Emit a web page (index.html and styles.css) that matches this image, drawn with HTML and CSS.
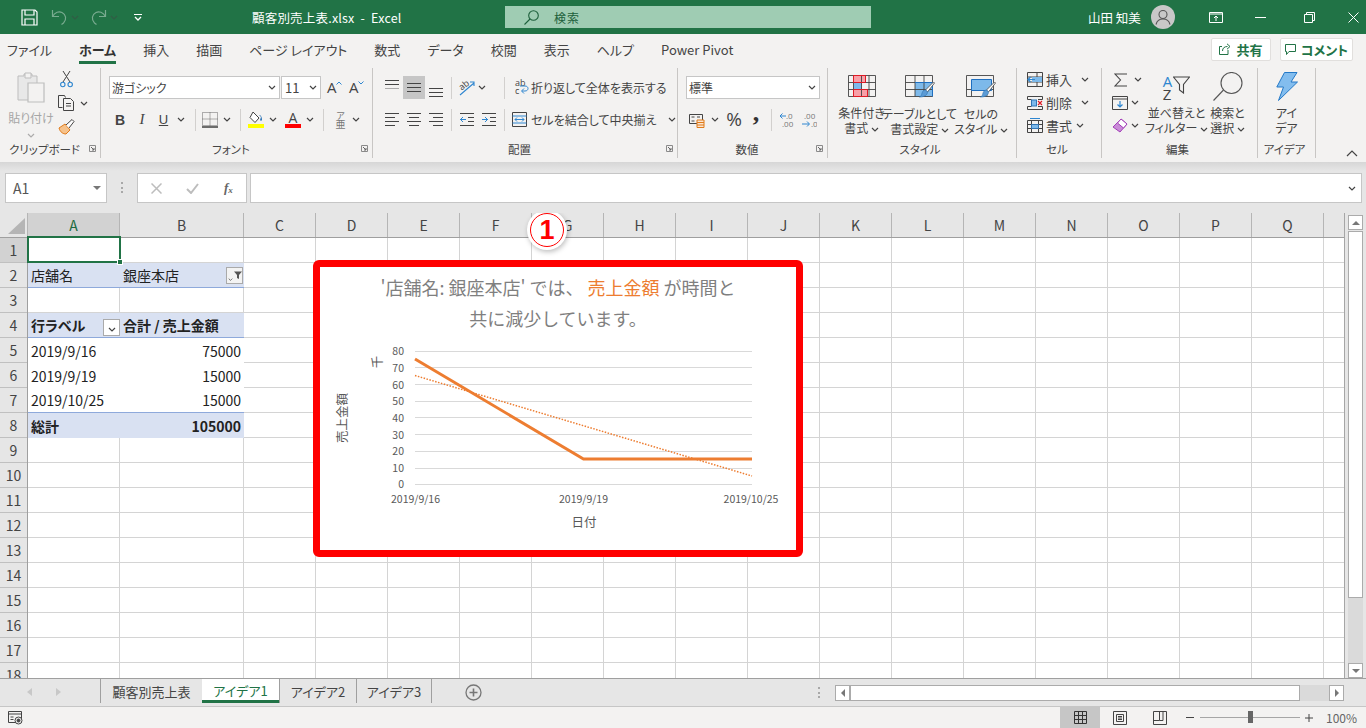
FILE: index.html
```html
<!DOCTYPE html>
<html lang="ja">
<head>
	<meta charset="utf-8">
	<title>顧客別売上表.xlsx - Excel</title>
	<link rel="stylesheet" href="styles.css">
</head>
<body>
	<!-- 使い回すアイコン -->
	<svg class="defs" width="0" height="0">
		<symbol id="chev" viewBox="0 0 8 5"><polyline points="1,1 4,4 7,1" fill="none" stroke="#444" stroke-width="1.2"/></symbol>
		<symbol id="launch" viewBox="0 0 7 7"><path d="M0.5 0.5h6v6h-6z" fill="none" stroke="#8a8a8a"/><path d="M2 2l3 3M5 3v2H3" fill="none" stroke="#666"/></symbol>
		<symbol id="brush" viewBox="0 0 16 17"><path d="M14.5 1l1 1-7 9-2-2z" fill="#fff" stroke="#555" stroke-width=".9"/><path d="M6.5 9l2 2c0 3-3 5-8 5 2-1 2-2 2.500-4 .5-2 2-3 3.500-3z" fill="#5b9bd5" stroke="#2e75b6" stroke-width=".6"/></symbol>
		<symbol id="funnel" viewBox="0 0 10 10"><path d="M1 1.500h8L6 5v4L4 8V5z" fill="#555"/></symbol>
	</svg>

	<header class="titlebar">
		<svg class="qa-save" width="17" height="17" viewBox="0 0 17 17" fill="none" stroke="#fff" stroke-width="1.200"><path d="M1 1h13l2 2v13H1z"/><path d="M4 1v5h9V1M4 16v-6h9v6"/></svg>
		<svg class="qa-undo" width="17" height="17" viewBox="0 0 17 17" fill="none" stroke="#79ab90" stroke-width="1.200"><path d="M1.500 1v6.500H8"/><path d="M1.500 7.500C4 3 8 2 11 3.500c4 2 5 7 1.500 10.500l-2 1.500"/></svg>
		<svg class="chev dim"><use href="#chev"/></svg>
		<svg class="qa-redo" width="17" height="17" viewBox="0 0 17 17" fill="none" stroke="#79ab90" stroke-width="1.200"><path d="M15.500 1v6.500H9"/><path d="M15.500 7.500C13 3 9 2 6 3.500c-4 2-5 7-1.500 10.500l2 1.500"/></svg>
		<svg class="chev dim"><use href="#chev"/></svg>
		<svg class="qa-more" width="8" height="7" viewBox="0 0 8 7" fill="none" stroke="#fff"><path d="M0 .5h8"/><path d="M1 3l3 3 3-3" stroke-width="1.300"/></svg>
		<div class="doc-title">顧客別売上表.xlsx&nbsp; - &nbsp;Excel</div>
		<div class="searchbox">
			<svg width="15" height="15" viewBox="0 0 15 15" fill="none" stroke="#1d5f3b" stroke-width="1.100"><circle cx="9.500" cy="5.500" r="4.800"/><path d="M6 9l-5.500 5.500"/></svg>
			<span>検索</span>
		</div>
		<div class="username">山田 知美</div>
		<svg class="avatar" width="24" height="24" viewBox="0 0 24 24"><circle cx="12" cy="12" r="12" fill="#c8c8c8"/><circle cx="12" cy="9.500" r="4" fill="none" stroke="#555" stroke-width="1.100"/><path d="M5 19.500c1-4 4-5.500 7-5.500s6 1.500 7 5.500" fill="none" stroke="#555" stroke-width="1.100"/></svg>
		<svg class="win-display" width="14" height="12" viewBox="0 0 14 12" fill="none" stroke="#fff"><path d="M.5 1.500h13v10H.5zM.5 3h13"/><path d="M7 10V5M5 7l2-2 2 2"/></svg>
		<svg class="win-min" width="11" height="1" viewBox="0 0 11 1"><path d="M0 .5h11" stroke="#fff"/></svg>
		<svg class="win-restore" width="11" height="11" viewBox="0 0 11 11" fill="none" stroke="#fff"><path d="M.5 2.500h8v8h-8zM2.500 2.500v-2h8v8h-2"/></svg>
		<svg class="win-close" width="11" height="11" viewBox="0 0 11 11" stroke="#fff"><path d="M.5.5l10 10M10.500.5l-10 10"/></svg>
	</header>

	<nav class="tabs">
		<a>ファイル</a>
		<a class="on">ホーム</a>
		<a>挿入</a>
		<a>描画</a>
		<a>ページ レイアウト</a>
		<a>数式</a>
		<a>データ</a>
		<a>校閲</a>
		<a>表示</a>
		<a>ヘルプ</a>
		<a>Power Pivot</a>
		<div class="tab-btns">
			<button class="share">
				<svg width="12" height="12" viewBox="0 0 12 12" fill="none" stroke="#217346"><path d="M9 7v4.500H.5V3.500H3"/><path d="M3.500 8c0-3 2-4.500 5-4.500M8 .8l3 2.700-3 2.700"/></svg>
				共有
			</button>
			<button class="comment">
				<svg width="11" height="11" viewBox="0 0 11 11" fill="none" stroke="#217346"><path d="M.5.5h10v7H4l-2.500 3v-3h-1z"/></svg>
				コメント
			</button>
		</div>
	</nav>

	<section class="ribbon">
		<!-- クリップボード -->
		<div class="group g-clip">
			<div class="group-body clip-body">
				<div class="big paste">
					<svg width="28" height="31" viewBox="0 0 28 31"><path d="M1 4h6v-2h8v2h5v24H1z" fill="#e8e8e8" stroke="#bdbdbd"/><path d="M8 1h6v5H8z" fill="#f3f2f1" stroke="#bdbdbd"/><path d="M11 11h16v19H11z" fill="#f3f2f1" stroke="#bdbdbd" stroke-width="1.200"/></svg>
					<span class="paste-label">貼り付け</span>
					<svg class="chev grey"><use href="#chev"/></svg>
				</div>
				<div class="clip-tools">
					<svg class="ic-cut" width="13" height="17" viewBox="0 0 13 17" fill="none"><path d="M3 0l7 11M10 0L3 11" stroke="#444"/><circle cx="2.800" cy="13.500" r="2.200" stroke="#2e86d0" stroke-width="1.100"/><circle cx="10.200" cy="13.500" r="2.200" stroke="#2e86d0" stroke-width="1.100"/></svg>
					<div class="row-inline">
						<svg width="17" height="16" viewBox="0 0 17 16" fill="none" stroke="#444"><path d="M4.500 12.500H.5V.5h6l1 2"/><path d="M5.500 3.500h7l3 3v9h-10z"/><path d="M8 8.500h5M8 11h5"/></svg>
						<svg class="chev copy-chev"><use href="#chev"/></svg>
					</div>
					<svg class="ic-painter" width="17" height="16" viewBox="0 0 17 16"><path d="M1 9l6-4 5 6-4 4C5 15 2 13 1 9z" fill="#f6c28b" stroke="#e07b1a"/><path d="M8 6l6-5.500 2 2L11 9" fill="#fff" stroke="#444"/></svg>
				</div>
			</div>
			<div class="group-label"><span>クリップボード</span><svg class="launch"><use href="#launch"/></svg></div>
		</div>

		<!-- フォント -->
		<div class="group g-font">
			<div class="group-body pad8">
				<div class="tool-row">
					<div class="combo w171"><span>游ゴシック</span><svg class="chev"><use href="#chev"/></svg></div>
					<div class="combo w40 size-combo"><span>11</span><svg class="chev"><use href="#chev"/></svg></div>
					<span class="grow-a ml6">A<svg class="caret" width="6" height="4" viewBox="0 0 6 4" fill="none" stroke="#2e86d0"><path d="M.5 3.500L3 1l2.500 2.500"/></svg></span>
					<span class="grow-a ml7">A<svg class="caret" width="6" height="4" viewBox="0 0 6 4" fill="none" stroke="#2e86d0"><path d="M.5.5L3 3 5.500.5"/></svg></span>
				</div>
				<div class="tool-row row2">
					<b class="txt-btn w22 bold-b">B</b>
					<i class="txt-btn w22 ital-i">I</i>
					<u class="txt-btn w21 und-u">U</u>
					<span class="slot w14"><svg class="chev"><use href="#chev"/></svg></span>
					<span class="sep ml7"></span>
					<svg class="ml6" width="16" height="16" viewBox="0 0 16 16" fill="none"><path d="M.5.500h15v13H.5zM8 .5v13M.5 7h15" stroke="#666" stroke-dasharray="1 1"/><path d="M0 15h16" stroke="#222" stroke-width="1.300"/></svg>
					<span class="slot w18"><svg class="chev"><use href="#chev"/></svg></span>
					<span class="sep ml4"></span>
					<svg class="ml7" width="16" height="17" viewBox="0 0 16 17"><path d="M5 1l6 6-4 4.500-5-5z" fill="#fff" stroke="#444"/><path d="M11 4c2 0 3 2 3 5l-1 1-1-1 1-3z" fill="#2e75b6"/><rect x="0" y="13" width="16" height="4" fill="#ffff00"/></svg>
					<span class="slot w18"><svg class="chev"><use href="#chev"/></svg></span>
					<span class="font-color ml3">A</span>
					<span class="slot w18"><svg class="chev"><use href="#chev"/></svg></span>
					<span class="sep ml4"></span>
					<span class="phonetic ml10"><small>ア</small>亜</span>
					<span class="slot w18"><svg class="chev"><use href="#chev"/></svg></span>
				</div>
			</div>
			<div class="group-label"><span>フォント</span><svg class="launch"><use href="#launch"/></svg></div>
		</div>

		<!-- 配置 -->
		<div class="group g-align">
			<div class="group-body pad8">
				<div class="tool-row">
					<span class="slot w22"><svg class="al" width="14" height="22" viewBox="0 0 14 22" stroke="#444"><path d="M0 3.500h14M0 7.500h14"/><path d="M0 11.500h14" stroke="#aaa"/></svg></span>
					<span class="slot w22 active"><svg class="al" width="14" height="22" viewBox="0 0 14 22" stroke="#444"><path d="M0 6.500h14M0 10.500h14M0 14.500h14"/></svg></span>
					<span class="slot w22"><svg class="al" width="14" height="22" viewBox="0 0 14 22" stroke="#444"><path d="M0 11.500h14M0 15.500h14M0 19.500h14"/></svg></span>
					<span class="sep ml4"></span>
					<svg class="ml7" width="16" height="16" viewBox="0 0 16 16" fill="none"><path d="M1 15L15 3M11 2h4v4" stroke="#2e86d0" stroke-width="1.100"/><text x="0" y="9" class="rot-txt" transform="rotate(-40 4 6)">ab</text></svg>
					<span class="slot w14"><svg class="chev"><use href="#chev"/></svg></span>
					<span class="sep ml15"></span>
					<svg class="ml9" width="15" height="17" viewBox="0 0 15 17" fill="none"><text x="1" y="7" class="wrap-txt">ab</text><text x="1" y="15" class="wrap-txt">c</text><path d="M8 12h3c4 0 4-5 0-5H6M10 9.500L7.500 12l2.500 2.500" stroke="#2e86d0"/></svg>
					<span class="rib-text ml2">折り返して全体を表示する</span>
				</div>
				<div class="tool-row row2">
					<span class="slot w22"><svg width="14" height="13" viewBox="0 0 14 13" stroke="#444"><path d="M0 .5h14M0 4.500h10M0 8.500h14M0 12.500h10"/></svg></span>
					<span class="slot w22"><svg width="14" height="13" viewBox="0 0 14 13" stroke="#444"><path d="M0 .5h14M2 4.500h10M0 8.500h14M2 12.500h10"/></svg></span>
					<span class="slot w22"><svg width="14" height="13" viewBox="0 0 14 13" stroke="#444"><path d="M0 .5h14M4 4.500h10M0 8.500h14M4 12.500h10"/></svg></span>
					<span class="sep ml4"></span>
					<svg class="ml8" width="14" height="13" viewBox="0 0 14 13" fill="none"><path d="M0 .5h14M0 12.500h14M8 4.500h6M8 8.500h6" stroke="#444"/><path d="M6 6.500H0M3 4L.5 6.500 3 9" stroke="#2e86d0"/></svg>
					<svg class="ml8" width="14" height="13" viewBox="0 0 14 13" fill="none"><path d="M0 .5h14M0 12.500h14M8 4.500h6M8 8.500h6" stroke="#444"/><path d="M0 6.500h6M3 4l2.500 2.500L3 9" stroke="#2e86d0"/></svg>
					<span class="sep ml8"></span>
					<svg class="ml7" width="15" height="15" viewBox="0 0 15 15" fill="none"><path d="M.5.5h14v14H.5z" stroke="#444"/><path d="M.5 4h14M.5 11h14" stroke="#2e86d0"/><path d="M3 7.500h9M5 5.500l-2 2 2 2M10 5.500l2 2-2 2" stroke="#2e86d0"/></svg>
					<span class="rib-text ml4">セルを結合して中央揃え</span>
					<svg class="chev merge-chev"><use href="#chev"/></svg>
				</div>
			</div>
			<div class="group-label"><span>配置</span><svg class="launch"><use href="#launch"/></svg></div>
		</div>

		<!-- 数値 -->
		<div class="group g-num">
			<div class="group-body pad8">
				<div class="tool-row">
					<div class="combo w134"><span>標準</span><svg class="chev"><use href="#chev"/></svg></div>
				</div>
				<div class="tool-row row2">
					<svg class="ml3" width="16" height="16" viewBox="0 0 16 16" fill="none"><path d="M.5 2.500h13v9H.5z" stroke="#444"/><path d="M2.500 5h3M2.500 9h3M8 5h3" stroke="#444"/><path d="M8 8h7v7.500H8z" fill="#fbe5d0" stroke="#e07b1a"/><path d="M8 10.500h7M8 13h7" stroke="#e07b1a"/></svg>
					<span class="slot w20"><svg class="chev"><use href="#chev"/></svg></span>
					<span class="percent ml1">%</span>
					<span class="comma ml10">,</span>
					<span class="sep ml11"></span>
					<svg class="ml7" width="16" height="16" viewBox="0 0 16 16" fill="none"><text x="7" y="6.500" class="dec-txt">.0</text><text x="3" y="15" class="dec-txt">.00</text><path d="M7 4H1M3.500 1.500L1 4l2.500 2.500" stroke="#2e86d0"/></svg>
					<svg class="ml6" width="16" height="16" viewBox="0 0 16 16" fill="none"><text x="3" y="6.500" class="dec-txt">.00</text><text x="10" y="15" class="dec-txt">.0</text><path d="M1 12h7M6 9.500L8.500 12 6 14.500" stroke="#2e86d0"/></svg>
				</div>
			</div>
			<div class="group-label"><span>数値</span><svg class="launch"><use href="#launch"/></svg></div>
		</div>

		<!-- スタイル -->
		<div class="group g-style">
			<div class="group-body style-body">
				<div class="big w51">
					<svg width="28" height="22" viewBox="0 0 28 22" fill="none"><path d="M5.500 .5h12v7h-12zM5.500 14.500h14v7h-14z" fill="#f8a0a8" stroke="#e01b24"/><path d="M5.500 7.500h8v7h-8z" fill="#7db9ea"/><path d="M.5.500h27v21H.5zM.5 7.500h27M.5 14.500h27M5.500.5v21M13.500.5v21M21 .5v21" stroke="#444" stroke-width=".9"/><path d="M5.500 .5h12v7h-12zM5.500 14.500h14v7h-14z" stroke="#e01b24"/></svg>
					<span class="big-label">条件付き<br>書式 <svg class="chev"><use href="#chev"/></svg></span>
				</div>
				<div class="big w65">
					<div class="brushed">
						<svg width="28" height="22" viewBox="0 0 28 22" fill="none"><path d="M10 7.500h17v14H10z" fill="#7db9ea"/><path d="M.5.500h27v21H.5zM.5 7.500h27M.5 14.500h27M10 .5v21M19 .5v21" stroke="#444" stroke-width=".9"/><path d="M10 7.500h17.500v14" stroke="#1f6fc0"/></svg>
						<svg class="brush"><use href="#brush"/></svg>
					</div>
					<span class="big-label">テーブルとして<br>書式設定 <svg class="chev"><use href="#chev"/></svg></span>
				</div>
				<div class="big w58">
					<div class="brushed">
						<svg width="28" height="22" viewBox="0 0 28 22" fill="none"><path d="M.5.500h27v21H.5zM.5 14.500h27M5.500 14.500v7M21 14.500v7" stroke="#444" stroke-width=".9"/><path d="M5.500 4.500h20v11h-20z" fill="#7db9ea" stroke="#1f6fc0"/></svg>
						<svg class="brush"><use href="#brush"/></svg>
					</div>
					<span class="big-label">セルの<br>スタイル <svg class="chev"><use href="#chev"/></svg></span>
				</div>
			</div>
			<div class="group-label center"><span>スタイル</span></div>
		</div>

		<!-- セル -->
		<div class="group g-cells">
			<div class="group-body cell-rows">
				<div class="cell-tool">
					<svg width="16" height="15" viewBox="0 0 16 15" fill="none"><path d="M.5.500h15v14H.5zM.5 5h15M.5 10h15M10 .5v14" stroke="#444"/><path d="M5 5h10v5H5z" fill="#7db9ea"/><path d="M8 7.500H1M3.500 5L1 7.500 3.500 10" stroke="#2e86d0" stroke-width="1.200"/></svg>
					<span>挿入</span><svg class="chev chev-far"><use href="#chev"/></svg>
				</div>
				<div class="cell-tool">
					<svg width="16" height="14" viewBox="0 0 16 14" fill="none"><path d="M.5 3.500v-3h15v3M.5 10.500v3h15v-3M.5 3.500h4M.5 10.500h4M11 3.500h4.500M11 10.500h4.500" stroke="#444"/><rect x="4.500" y="4" width="5" height="6" fill="#7db9ea" stroke="#2e75b6"/><path d="M11 5l4 4M15 5l-4 4" stroke="#e01b24" stroke-width="1.100"/></svg>
					<span>削除</span><svg class="chev chev-far"><use href="#chev"/></svg>
				</div>
				<div class="cell-tool">
					<svg width="16" height="15" viewBox="0 0 16 15" fill="none"><path d="M.5 2.500h15v12H.5zM.5 6.500h15M.5 10.500h15M4.500 2.500v12M11.500 2.500v12" stroke="#444"/><path d="M4.500 6.500h7v4h-7z" fill="#7db9ea" stroke="#2e75b6"/><path d="M3 .5h10" stroke="#2e86d0"/></svg>
					<span>書式</span><svg class="chev chev-near"><use href="#chev"/></svg>
				</div>
			</div>
			<div class="group-label center"><span>セル</span></div>
		</div>

		<!-- 編集 -->
		<div class="group g-edit">
			<div class="group-body edit-body">
				<div class="edit-rows">
					<div class="edit-tool">
						<svg class="ml2" width="13" height="14" viewBox="0 0 13 14" fill="none" stroke="#444" stroke-width="1.100"><path d="M13 1H1l5.500 6L1 13h12"/></svg>
						<svg class="chev ml7"><use href="#chev"/></svg>
					</div>
					<div class="edit-tool">
						<svg width="16" height="14" viewBox="0 0 16 14" fill="none"><path d="M.5.500h15v13H.5zM.5 3h15" stroke="#444"/><path d="M8 5v6M5.500 8.500L8 11l2.500-2.500" stroke="#2e86d0" stroke-width="1.200"/></svg>
						<svg class="chev ml3"><use href="#chev"/></svg>
					</div>
					<div class="edit-tool">
						<svg width="16" height="15" viewBox="0 0 16 15"><path d="M9 1l6 5-7 8-7-5z" fill="#c98bd8" stroke="#a33fb8"/><path d="M9 1l6 5-3.500 4-6-5z" fill="#fff" stroke="#a33fb8"/></svg>
						<svg class="chev ml3"><use href="#chev"/></svg>
					</div>
				</div>
				<div class="big w53">
					<div class="sort-ic">
						<span class="az"><em>A</em><br>Z</span>
						<svg width="17" height="18" viewBox="0 0 17 18" fill="none" stroke="#444" stroke-width="1.100"><path d="M.5 1h16L10.500 8.500V17l-4-3V8.500z"/></svg>
					</div>
					<span class="big-label tight">並べ替えと<br>フィルター <svg class="chev"><use href="#chev"/></svg></span>
				</div>
				<div class="big w49">
					<svg width="30" height="29" viewBox="0 0 30 29" fill="none" stroke="#555" stroke-width="1.100"><circle cx="18.500" cy="11" r="10.500"/><path d="M10.500 18L.5 28.500"/></svg>
					<span class="big-label tight">検索と<br>選択 <svg class="chev"><use href="#chev"/></svg></span>
				</div>
			</div>
			<div class="group-label center"><span>編集</span></div>
		</div>

		<!-- アイデア -->
		<div class="group g-idea">
			<div class="group-body">
				<div class="big wfull">
					<svg width="22" height="29" viewBox="0 0 22 29"><path d="M8.500 .5h12.500l-6 9.500h6.500L2.500 28.500 7.500 15H.8z" fill="#83bdee" stroke="#2479c7"/></svg>
					<span class="big-label tight">アイ<br>デア</span>
				</div>
			</div>
			<div class="group-label center"><span>アイデア</span></div>
		</div>

		<svg class="collapse" width="12" height="7" viewBox="0 0 12 7" fill="none" stroke="#444" stroke-width="1.200"><path d="M1 6l5-5 5 5"/></svg>
	</section>

	<section class="formula-bar">
		<div class="namebox"><span>A1</span><i class="tri"></i></div>
		<div class="fx-dots"></div>
		<div class="fx-btns">
			<svg width="11" height="11" viewBox="0 0 11 11" stroke="#bdbdbd" stroke-width="1.500"><path d="M.5.5l10 10M10.500.5l-10 10"/></svg>
			<svg width="13" height="11" viewBox="0 0 13 11" fill="none" stroke="#bdbdbd" stroke-width="2"><path d="M1 6l4 4 7-9"/></svg>
			<span class="fx">f<sub>x</sub></span>
		</div>
		<div class="fx-input"><svg class="chev"><use href="#chev"/></svg></div>
	</section>

	<section class="sheet">
		<div class="grid-area">
			<div class="col-head">
				<div class="corner"><svg width="17" height="16" viewBox="0 0 17 16"><path d="M17 0v16H0z" fill="#b5b5b5"/></svg></div>
				<div class="ch ca sel-h">A</div>
				<div class="ch cb">B</div>
				<div class="ch">C</div>
				<div class="ch">D</div>
				<div class="ch">E</div>
				<div class="ch">F</div>
				<div class="ch">G</div>
				<div class="ch">H</div>
				<div class="ch">I</div>
				<div class="ch">J</div>
				<div class="ch">K</div>
				<div class="ch">L</div>
				<div class="ch">M</div>
				<div class="ch">N</div>
				<div class="ch">O</div>
				<div class="ch">P</div>
				<div class="ch">Q</div>
				<div class="ch crest"></div>
			</div>
			<div class="grid-body">
				<div class="row-head">
					<div class="rh sel-h">1</div><div class="rh">2</div><div class="rh">3</div>
					<div class="rh">4</div><div class="rh">5</div><div class="rh">6</div>
					<div class="rh">7</div><div class="rh">8</div><div class="rh">9</div>
					<div class="rh">10</div><div class="rh">11</div><div class="rh">12</div>
					<div class="rh">13</div><div class="rh">14</div><div class="rh">15</div>
					<div class="rh">16</div><div class="rh">17</div><div class="rh">18</div>
				</div>
				<div class="col ca">
					<div class="cell a1"><div class="selection"><i></i></div></div>
					<div class="cell pv-band">店舗名</div>
					<div class="cell"></div>
					<div class="cell pv-band bold">行ラベル<span class="filter-btn"><svg class="chev"><use href="#chev"/></svg></span></div>
					<div class="cell pv-row">2019/9/16</div>
					<div class="cell pv-row">2019/9/19</div>
					<div class="cell pv-row pv-last">2019/10/25</div>
					<div class="cell pv-total bold">総計</div>
				</div>
				<div class="col cb">
					<div class="cell"></div>
					<div class="cell pv-band">銀座本店<span class="filter-btn"><svg class="chev small"><use href="#chev"/></svg><svg class="funnel"><use href="#funnel"/></svg></span></div>
					<div class="cell"></div>
					<div class="cell pv-band bold">合計 / 売上金額</div>
					<div class="cell pv-row num">75000</div>
					<div class="cell pv-row num">15000</div>
					<div class="cell pv-row pv-last num">15000</div>
					<div class="cell pv-total bold num">105000</div>
				</div>
				<div class="col"></div><div class="col"></div><div class="col"></div><div class="col"></div>
				<div class="col"></div><div class="col"></div><div class="col"></div><div class="col"></div>
				<div class="col"></div><div class="col"></div><div class="col"></div><div class="col"></div>
				<div class="col"></div><div class="col"></div><div class="col"></div>
				<div class="col crest"></div>
			</div>
		</div>

		<div class="vscroll">
			<div class="sb-btn"><i class="tri up"></i></div>
			<div class="sb-thumb"></div>
			<div class="sb-track"></div>
			<div class="sb-btn"><i class="tri"></i></div>
		</div>

		<!-- グラフ（シートの上に浮いている） -->
		<div class="chart">
			<div class="chart-title">'店舗名: 銀座本店' では、 <span class="hl">売上金額</span> が時間と<br>共に減少しています。</div>
			<svg class="plot" width="476" height="216" viewBox="0 0 476 216">
				<g stroke="#d9d9d9">
					<path d="M95 17.500h337M95 33.500h337M95 50.500h337M95 67.500h337M95 83.500h337M95 100.500h337M95 117.500h337M95 134.500h337M95 150.500h337"/>
				</g>
				<g class="tick" text-anchor="end">
					<text x="84" y="21">80</text><text x="84" y="37.500">70</text><text x="84" y="54.500">60</text>
					<text x="84" y="71">50</text><text x="84" y="87.500">40</text><text x="84" y="104.500">30</text>
					<text x="84" y="121">20</text><text x="84" y="137.500">10</text><text x="84" y="154">0</text>
				</g>
				<g class="tick" text-anchor="middle">
					<text x="95.500" y="169">2019/9/16</text><text x="263.500" y="169">2019/9/19</text><text x="431" y="169">2019/10/25</text>
				</g>
				<text class="axis" x="264" y="193" text-anchor="middle">日付</text>
				<text class="axis" text-anchor="middle" transform="translate(26.500 84) rotate(-90)">売上金額</text>
				<text class="axis" text-anchor="middle" transform="translate(61.500 28) rotate(-90)">千</text>
				<path d="M95 25L263.500 125H432" fill="none" stroke="#ed7d31" stroke-width="3"/>
				<path d="M95 41.500L432 142" fill="none" stroke="#ed7d31" stroke-width="1.500" stroke-dasharray="1.500 1.500"/>
			</svg>
		</div>
		<div class="badge">1</div>
	</section>

	<section class="sheet-tabs">
		<div class="tab-nav">
			<svg width="5" height="8" viewBox="0 0 5 8"><path d="M5 0v8L0 4z" fill="#c8c8c8"/></svg>
			<svg width="5" height="8" viewBox="0 0 5 8"><path d="M0 0v8l5-4z" fill="#c8c8c8"/></svg>
		</div>
		<div class="stab w102">顧客別売上表</div>
		<div class="stab on">アイデア1</div>
		<div class="stab w77">アイデア2</div>
		<div class="stab w76">アイデア3</div>
		<svg class="add-sheet" width="17" height="17" viewBox="0 0 17 17" fill="none" stroke="#777"><circle cx="8.500" cy="8.500" r="7.500" stroke-width="1.300"/><path d="M8.500 4.500v8M4.500 8.500h8" stroke-width="1.600"/></svg>
		<div class="split-dots"></div>
		<div class="hscroll">
			<div class="sb-btn"><i class="tri left"></i></div>
			<div class="hs-thumb"></div>
			<div class="hs-track"></div>
			<div class="sb-btn"><i class="tri right"></i></div>
		</div>
	</section>

	<footer class="status">
		<svg width="15" height="14" viewBox="0 0 15 14" fill="none" stroke="#444"><path d="M.5.500h13v11H.5zM.5 3h13M2.500 6h3M2.500 8.500h3"/><circle cx="10.500" cy="9.500" r="3.500" fill="#f3f2f1"/><circle cx="10.500" cy="9.500" r="1.500" fill="#444"/></svg>
		<div class="view-btns">
			<span class="view on"><svg width="13" height="13" viewBox="0 0 13 13" fill="none" stroke="#333"><path d="M.5.500h12v12H.5zM4.500.5v12M8.500.5v12M.5 4.500h12M.5 8.500h12"/></svg></span>
			<span class="view"><svg width="14" height="14" viewBox="0 0 14 14" fill="none" stroke="#444"><path d="M.5.500h13v13H.5zM3.500 3.500h7v7h-7zM5 5.500h4M5 7h4M5 8.500h4"/></svg></span>
			<span class="view"><svg width="14" height="14" viewBox="0 0 14 14" fill="none" stroke="#444"><path d="M.5.500h13v13H.5zM.5 9.500h6v-9M6.500.5M10 .5v9H6.500"/></svg></span>
		</div>
		<svg class="z-minus" width="8" height="1" viewBox="0 0 8 1"><path d="M0 .5h8" stroke="#444"/></svg>
		<div class="zoom-track"><i></i></div>
		<svg class="z-plus" width="8" height="8" viewBox="0 0 8 8"><path d="M0 4h8M4 0v8" stroke="#444"/></svg>
		<span class="zoom-val">100%</span>
	</footer>
</body>
</html>
```

FILE: styles.css
```css
*{box-sizing: border-box; margin: 0; padding: 0;}
html,body{height: 100%; overflow: hidden;}
body{width: 1366px; height: 728px; display: flex; flex-direction: column;
	background: #e6e6e6; color: #444;
	font-family: "Noto Sans CJK JP", "Noto Sans", sans-serif; font-size: 12px;
	font-feature-settings: "palt";}
svg{display: block; flex: none;}
.defs{position: absolute;}
.chev{width: 8px; height: 5px;}
.chev.dim{opacity: .45; margin-left: 3px;}
.chev.grey{opacity: .4;}

/* タイトルバー */
.titlebar{height: 34px; flex: none; background: #217346; color: #fff; display: flex; align-items: center;}
.qa-save{margin-left: 21px;}
.qa-undo{margin-left: 13px;}
.qa-redo{margin-left: 11px;}
.qa-more{margin-left: 16px;}
.doc-title{margin-left: 110px; width: 253px; font-size: 12.5px; letter-spacing: .2px;}
.searchbox{width: 366px; height: 22px; background: #9fccb3; display: flex; align-items: center;
	padding-left: 19px; color: #1d5f3b; font-size: 12px;}
.searchbox span{margin-left: 15px; letter-spacing: 1px;}
.username{margin-left: 217px; width: 44px; font-size: 12.5px; white-space: nowrap;}
.avatar{margin-left: 19px;}
.win-display{margin-left: 34px;}
.win-min{margin-left: 32px;}
.win-restore{margin-left: 38px;}
.win-close{margin-left: 33px;}

/* タブ */
.tabs{height: 30px; flex: none; background: #f3f2f1; display: flex; align-items: center;
	padding-left: 7px; font-size: 13px; color: #444;}
.tabs a{margin-right: 27px; position: relative; white-space: nowrap;}
.tabs a.on{font-weight: 700; color: #333;}
.tabs a.on::after{content: ""; position: absolute; left: 0; right: 0; bottom: -5px; height: 3px; background: #217346;}
.tab-btns{margin-left: auto; margin-right: 13px; display: flex; gap: 9px;}
.tab-btns button{height: 23px; background: #fff; border: 1px solid #e1dfdd; border-radius: 2px;
	display: flex; align-items: center; justify-content: center; gap: 5px;
	font: 700 13px "Noto Sans CJK JP", sans-serif; font-feature-settings: "palt"; color: #217346;}
.share{width: 60px;}
.comment{width: 73px;}

/* リボン */
.ribbon{height: 98px; flex: none; background: #f3f2f1; display: flex; position: relative;}
.group{margin-top: 4px; height: 90px; border-right: 1px solid #c8c6c4; display: flex; flex-direction: column;}
.group-body{height: 71px;}
.pad8{padding: 8px 0 0 8px;}
.group-label{flex: 1; display: flex; align-items: center; padding-right: 4px; font-size: 11.5px; color: #444;}
.group-label span{flex: 1; text-align: center;}
.launch{width: 7px; height: 7px;}
.g-clip{width: 101px;}
.g-font{width: 272px;}
.g-align{width: 305px;}
.g-num{width: 150px;}
.g-style{width: 189px;}
.g-cells{width: 85px;}
.g-edit{width: 156px;}
.g-idea{width: 58px;}
.collapse{position: absolute; right: 8px; bottom: 5px;}

.tool-row{display: flex; align-items: center; height: 23px;}
.tool-row.row2{margin-top: 9px;}
.slot{display: flex; align-items: center; justify-content: center; height: 23px; flex: none;}
.active{background: #c6c6c6;}
.sep{width: 1px; height: 22px; background: #d2d0ce; flex: none;}
.w14{width: 14px;} .w18{width: 18px;} .w20{width: 20px;} .w21{width: 21px;} .w22{width: 22px;}
.ml1{margin-left: 1px;} .ml2{margin-left: 2px;} .ml3{margin-left: 3px;} .ml4{margin-left: 4px;}
.ml6{margin-left: 6px;} .ml7{margin-left: 7px;} .ml8{margin-left: 8px;} .ml9{margin-left: 9px;}
.ml10{margin-left: 10px;} .ml11{margin-left: 11px;} .ml15{margin-left: 15px;}

.combo{height: 23px; background: #fff; border: 1px solid #c6c6c6; display: flex; align-items: center;
	justify-content: space-between; padding: 0 3px 0 2px; font-size: 12px; flex: none;}
.w171{width: 171px;} .w40{width: 40px;} .w134{width: 134px;}
.size-combo{margin-left: 1px; padding-left: 3px; font-size: 13px;}
.grow-a{font-size: 15px; line-height: 1; display: flex; width: 15px; position: relative; font-family: "Open Sans", sans-serif;}
.caret{margin-top: 1px; margin-left: -1px;}
.txt-btn{display: flex; justify-content: center; align-items: center; height: 23px; font-size: 14px; color: #444;
	font-family: "Liberation Sans", sans-serif; flex: none;}
.ital-i{font-family: "Liberation Serif", serif; font-size: 15px;}
.und-u{font-size: 13px;}
.font-color{width: 16px; height: 17px; font-size: 14px; line-height: 14px; text-align: center;
	border-bottom: 4px solid #ff0000; flex: none; font-family: "Open Sans", sans-serif;}
.phonetic{width: 13px; font-size: 10px; line-height: 8px; color: #777; text-align: center; flex: none;}
.phonetic small{display: block; font-size: 9px;}
.rib-text{font-size: 12px; white-space: nowrap; color: #444;}
.rot-txt{font: 9px "Open Sans", sans-serif; fill: #444;}
.wrap-txt{font: 9px "Open Sans", sans-serif; fill: #444;}
.dec-txt{font: 8px "Open Sans", sans-serif; fill: #777;}
.merge-chev{margin-left: 12px;}
.percent{width: 16px; font-size: 19px; line-height: 1; text-align: center; flex: none; font-family: "Open Sans", sans-serif;}
.comma{width: 8px; height: 22px; font: 700 26px/8px "Liberation Serif", serif; color: #333; text-align: center; flex: none;}

/* 大きいボタン */
.big{display: flex; flex-direction: column; align-items: center; flex: none;}
.big-label{font-size: 12px; line-height: 15px; text-align: center; white-space: nowrap; margin-top: 8px; color: #444;}
.big-label .chev{display: inline-block; vertical-align: middle;}
.big-label.tight{margin-top: 4px;}
.wfull{width: 100%; padding-top: 4px;}
.w49{width: 49px;} .w51{width: 51px;} .w53{width: 53px;} .w58{width: 58px;} .w65{width: 65px;}
.clip-body{display: flex; padding-left: 8px;}
.paste{width: 46px; padding-top: 4px;}
.paste-label{margin-top: 6px; color: #a6a6a6; font-size: 12px; white-space: nowrap;}
.paste .chev{margin-top: 7px;}
.clip-tools{margin-left: 4px; display: flex; flex-direction: column;}
.ic-cut{margin: 3px 0 0 2px;}
.row-inline{display: flex; align-items: center; margin-top: 7px;}
.copy-chev{margin-left: 5px;}
.ic-painter{margin-top: 8px;}
.style-body{display: flex; padding: 7px 0 0 8px;}
.brushed{display: flex; height: 23px;}
.brushed .brush{width: 16px; height: 17px; margin: 6px 0 0 -14px;}
.cell-rows{padding-left: 10px;}
.cell-tool{height: 23px; display: flex; align-items: center; font-size: 13px;}
.cell-tool span{margin-left: 3px;}
.chev-far{margin-left: 9px;}
.chev-near{margin-left: 4px;}
.edit-body{display: flex; padding-left: 10px;}
.edit-rows{width: 38px; flex: none;}
.edit-tool{height: 23px; display: flex; align-items: center;}
.edit-body .big{padding-top: 4px;}
.sort-ic{display: flex; align-items: flex-end; height: 29px;}
.az{font: 15px/13px "Open Sans", sans-serif; color: #444; margin-right: 1px;}
.az em{font-style: normal; color: #2e86d0;}
.sort-ic svg{margin-bottom: 7px;}

/* 数式バー */
.formula-bar{height: 51px; flex: none; display: flex; padding-top: 11px; align-items: flex-start;
	background: linear-gradient(#d6d6d6, #e6e6e6 9px);}
.namebox{margin-left: 5px; width: 102px; height: 30px; background: #fff; border: 1px solid #c6c6c6;
	display: flex; align-items: center; justify-content: space-between; padding: 0 5px 0 7px;
	font-size: 14px; color: #555;}
.tri{display: block; width: 0; height: 0; border-left: 4px solid transparent; border-right: 4px solid transparent;
	border-top: 4px solid #777;}
.fx-dots{width: 2px; height: 11px; margin: 9px 0 0 14px;
	background: repeating-linear-gradient(#a8a8a8 0 2px, transparent 2px 4.500px);}
.fx-btns{margin-left: 14px; width: 110px; height: 30px; background: #fff; border: 1px solid #c6c6c6;
	display: flex; align-items: center; gap: 24px; padding-left: 13px;}
.fx{font: italic 700 13px "Liberation Serif", serif; color: #666; margin-left: 1px;}
.fx sub{font-size: 9px; vertical-align: -1px;}
.fx-input{margin-left: 3px; width: 1112px; height: 30px; background: #fff; border: 1px solid #c6c6c6;
	display: flex; align-items: center; justify-content: flex-end; padding-right: 5px;}

/* シート */
.sheet{height: 465px; flex: none; position: relative; display: flex; overflow: hidden;}
.grid-area{width: 1345px; flex: none; border-right: 1px solid #a6a6a6; display: flex; flex-direction: column; overflow: hidden;}
.col-head{height: 25px; flex: none; display: flex; border-bottom: 1px solid #9f9f9f; background: #e6e6e6;}
.corner{width: 28px; flex: none; padding: 5px 0 0 8px; border-right: 1px solid #b5b5b5;}
.ch{width: 72px; flex: none; border-right: 1px solid #b5b5b5; text-align: center; font-size: 14px; line-height: 24px; color: #444;}
.ca{width: 92px;}
.cb{width: 124px;}
.sel-h{background: #d2d2d2; color: #1e6b41;}
.crest{width: 21px; border-right: 0;}
.grid-body{flex: 1; display: flex; position: relative;}
.row-head{width: 28px; flex: none; border-right: 1px solid #9f9f9f;}
.rh{height: 25px; border-bottom: 1px solid #c0c0c0; text-align: center; font-size: 14px; line-height: 24px; color: #444;}
.col{width: 72px; flex: none;
	background:
		linear-gradient(#d4d4d4, #d4d4d4) right top / 1px 100% no-repeat,
		repeating-linear-gradient(transparent 0 24px, #d4d4d4 24px 25px),
		#fff;}
.col.ca{width: 92px;}
.col.cb{width: 124px;}
.col.crest{width: 21px; background: repeating-linear-gradient(transparent 0 24px, #d4d4d4 24px 25px), #fff;}
.cell{height: 25px; padding: 0 3px 0 3px; display: flex; align-items: center; font-size: 14px;
	color: #222; white-space: nowrap; position: relative;}
.bold{font-weight: 700;}
.pv-band{background: #d9e1f2; border-bottom: 1px solid #8ea9db;}
.pv-row{background: #fff;}
.pv-last{border-bottom: 1px solid #8ea9db;}
.pv-total{background: #d9e1f2;}
.num{justify-content: flex-end; padding-right: 3px;}
.filter-btn{margin-left: auto; margin-right: -1px; width: 17px; height: 17px; background: #fff; border: 1px solid #aaa;
	display: flex; align-items: flex-end; justify-content: center; padding-bottom: 3px; flex: none;}
.pv-band.bold .filter-btn{margin-top: 5px; margin-right: -3px;}
.cb .filter-btn{background: #f3f3f3; margin-right: -2px; align-items: center; padding: 0 0 0 1px;}
.chev.small{width: 5px; height: 3px; margin-top: 8px;}
.funnel{width: 10px; height: 10px;}
.selection{position: absolute; left: -1px; top: -2px; width: 94px; height: 27px; border: 2px solid #217346; z-index: 2;}
.selection i{position: absolute; right: -4px; bottom: -4px; width: 6px; height: 6px; background: #217346; border: 1px solid #fff;}

.vscroll{flex: none; width: 15px; margin: 2px 0 0 3px; display: flex; flex-direction: column;}
.sb-btn{width: 15px; height: 15px; flex: none; background: #fff; border: 1px solid #ababab;
	display: flex; align-items: center; justify-content: center;}
.sb-btn .tri.up{border-top: 0; border-bottom: 4px solid #777;}
.sb-thumb{height: 367px; flex: none; background: #fff; border: 1px solid #ababab; margin-top: 1px;}
.sb-track{flex: 1; background: #dadada;}
.tri.left{border: 0; border-top: 4px solid transparent; border-bottom: 4px solid transparent; border-right: 4px solid #777;}
.tri.right{border: 0; border-top: 4px solid transparent; border-bottom: 4px solid transparent; border-left: 4px solid #777;}

/* グラフ */
.chart{position: absolute; left: 313px; top: 47px; width: 490px; height: 297px; background: #fff;
	border: 7px solid #ff0000; border-radius: 6px; z-index: 3; font-feature-settings: normal;}
.chart-title{padding-top: 5px; text-align: center; font-size: 18px; line-height: 31px; color: #7f7f7f; white-space: nowrap;}
.hl{color: #ed7d31;}
.tick text{font-size: 10.500px; fill: #595959;}
.axis{font-size: 12.500px; fill: #595959;}
.badge{position: absolute; left: 530px; top: 0; width: 34px; height: 34px; border-radius: 50%; background: #fff;
	border: 1px solid #ff0000; box-shadow: 0 0 0 3px #fff, 1px 2px 5px 3px rgba(0,0,0,.25); z-index: 4; color: #ff0000;
	font: 700 27px/32px "Liberation Sans", sans-serif; text-align: center;}

/* シート見出し */
.sheet-tabs{height: 29px; flex: none; display: flex; align-items: flex-start; background: #e6e6e6;
	border-top: 1px solid #9f9f9f; border-bottom: 1px solid #c6c6c6;}
.tab-nav{width: 100px; flex: none; display: flex; gap: 24px; padding: 9px 0 0 27px;}
.stab{height: 24px; flex: none; border-left: 1px solid #9f9f9f; margin-top: 0; padding-top: 1px; text-align: center;
	font-size: 13px; line-height: 24px; color: #444;}
.w102{width: 102px;}
.w77{width: 77px;}
.w76{width: 76px; border-right: 1px solid #9f9f9f;}
.stab.on{width: 77px; background: #fff; color: #217346; border-left: 0; border-bottom: 3px solid #217346; line-height: 23px; padding-top: 0;}
.add-sheet{margin: 5px 0 0 33px;}
.split-dots{width: 2px; height: 11px; margin: 8px 0 0 336px;
	background: repeating-linear-gradient(#a8a8a8 0 2px, transparent 2px 4.500px);}
.hscroll{margin: 6px 0 0 15px; width: 509px; height: 16px; display: flex;}
.hs-thumb{width: 450px; background: #fff; border: 1px solid #ababab;}
.hs-track{flex: 1; background: #dadada;}
.hscroll .sb-btn{height: 16px;}

/* ステータスバー */
.status{flex: 1; background: #f3f2f1; display: flex; align-items: center; padding-left: 8px;}
.view-btns{margin-left: 1037px; display: flex;}
.view{width: 40px; height: 21px; display: flex; align-items: center; justify-content: center;}
.view.on{background: #c6c6c6;}
.z-minus{margin-left: 6px;}
.zoom-track{margin-left: 6px; width: 100px; height: 1px; background: #a6a6a6; position: relative;}
.zoom-track i{position: absolute; left: 48px; top: -6px; width: 5px; height: 12px; background: #666;}
.z-plus{margin-left: 5px;}
.zoom-val{margin-left: 13px; font-size: 12px; color: #666;}
```
